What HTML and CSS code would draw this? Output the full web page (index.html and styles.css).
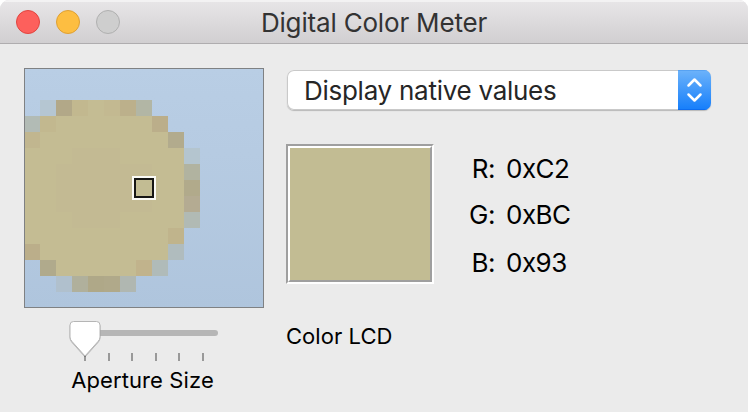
FILE: index.html
```html
<!DOCTYPE html>
<html lang="en">
<head>
<meta charset="utf-8">
<title>Digital Color Meter</title>
<link rel="stylesheet" href="styles.css">
</head>
<body>
<div class="window">
  <header class="titlebar">
    <div class="lights"><span class="light close"></span><span class="light minimize"></span><span class="light disabled"></span></div>
    <h1 class="title">Digital Color Meter</h1>
  </header>
  <main class="content">
    <section class="left">
      <svg class="lens" width="240" height="240" viewBox="0 0 240 240" shape-rendering="crispEdges">
        <defs><linearGradient id="sky" x1="0" y1="0" x2="0" y2="1"><stop offset="0" stop-color="#b9cee5"/><stop offset=".35" stop-color="#b6cbe2"/><stop offset="1" stop-color="#afc5dd"/></linearGradient></defs>
        <rect width="240" height="240" fill="url(#sky)"/>
        <path fill="#c4bc93" d="M32 32H112V48H144V64H160V80H176V160H160V192H128V208H32V192H0V48H32z"/>
        <path fill="#c3ba93" d="M48 80H96V96H128V144H96V160H48V144H32V96H48z"/>
        <g>
          <path fill="#b5c6d2" d="M16 32h16v16h-16z"/><path fill="#b2a888" d="M32 32h16v16h-16z"/><path fill="#c2b88f" d="M48 32h16v16h-16zM16 48h16v16h-16z"/><path fill="#c3b991" d="M80 32h16v16h-16z"/><path fill="#bcb08b" d="M96 32h16v16h-16z"/><path fill="#b2b6a5" d="M112 32h16v16h-16z"/>
          <path fill="#b2bbb5" d="M0 48h16v16h-16z"/><path fill="#bbae8a" d="M128 48h16v16h-16z"/>
          <path fill="#c1b68f" d="M0 64h16v16h-16z"/><path fill="#b2ab8d" d="M144 64h16v16h-16z"/>
          <path fill="#b4c5cf" d="M160 80h16v16h-16z"/><path fill="#b1b3a0" d="M160 96h16v16h-16z"/><path fill="#b1aa8b" d="M160 112h16v16h-16z"/><path fill="#b4ab92" d="M160 128h16v16h-16z"/><path fill="#b1bab4" d="M160 144h16v16h-16z"/>
          <path fill="#c0b48c" d="M144 160h16v16h-16z"/><path fill="#bbae8a" d="M0 176h16v16h-16z"/><path fill="#b0bcbe" d="M144 176h16v16h-16z"/>
          <path fill="#b0aa8c" d="M16 192h16v16h-16z"/><path fill="#c1b38c" d="M112 192h16v16h-16z"/><path fill="#b0bbb9" d="M128 192h16v16h-16z"/>
          <path fill="#b0c0cd" d="M32 208h16v16h-16z"/><path fill="#b0b09c" d="M48 208h16v16h-16z"/><path fill="#afa888" d="M64 208h16v16h-16z"/><path fill="#b0a98a" d="M80 208h16v16h-16z"/><path fill="#b0b7b1" d="M96 208h16v16h-16z"/>
        </g>
        <rect x="109" y="109" width="22" height="22" fill="none" stroke="#fafaf5" stroke-width="2"/>
        <rect x="111" y="111" width="18" height="18" fill="#c2bc93" stroke="#161614" stroke-width="2"/>
        <rect x=".5" y=".5" width="239" height="239" fill="none" stroke="#7f8183"/>
      </svg>
      <svg class="slider" width="240" height="56" viewBox="0 0 240 56">
        <rect x="48" y="22" width="146" height="6" rx="3" fill="#b6b6b6"/>
        <path fill="#999" d="M60 45h2v8h-2zM84 45h2v8h-2zM107 45h2v8h-2zM131 45h2v8h-2zM154 45h2v8h-2zM178 45h2v8h-2z"/>
        <path class="thumb" d="M49.500 13.500H72.500Q76 13.500 76 17V29Q76 31.500 74 33.500L61 48L48 33.500Q46 31.500 46 29V17Q46 13.500 49.500 13.500z"/>
      </svg>
      <div class="aperture">Aperture Size</div>
    </section>
    <section class="right">
      <div class="popup"><span class="popup-label">Display native values</span>
        <span class="stepper"><svg width="33" height="40" viewBox="0 0 33 40"><path d="M10.500 15.500L16.500 9.500L22.500 15.500M10.500 24.500L16.500 30.500L22.500 24.500" fill="none" stroke="#fff" stroke-width="2.500" stroke-linecap="round" stroke-linejoin="round"/></svg></span>
      </div>
      <div class="sample">
        <div class="well"><div class="ring"><div class="swatch"></div></div></div>
        <dl class="values">
          <dt>R:</dt><dd>0xC2</dd>
          <dt>G:</dt><dd>0xBC</dd>
          <dt>B:</dt><dd>0x93</dd>
        </dl>
      </div>
      <div class="display">Color LCD</div>
    </section>
  </main>
</div>
</body>
</html>
```
FILE: styles.css
```css
* { box-sizing: border-box; }
body { margin: 0; background: #fff; font-family: Inter, "Liberation Sans", sans-serif; color: #000; }
.window { width: 748px; height: 412px; background: #ebebeb; border-radius: 9px 9px 0 0; overflow: hidden; }
.titlebar { height: 44px; display: grid; grid-template-columns: 120px 1fr 120px; align-items: center; background: linear-gradient(#e8e6e8, #d1cfd1); border-bottom: 1px solid #afadaf; box-shadow: inset 0 2px 0 #f3f2f3; }
.lights { display: flex; gap: 16px; padding-left: 16px; }
.light { width: 24px; height: 24px; border-radius: 50%; border: 1px solid; }
.close { background: #fd605c; border-color: #e2443f; }
.minimize { background: #fdbe41; border-color: #dfa033; }
.disabled { background: #cecece; border-color: #b0b0b0; }
.title { margin: 0; padding-top: 2px; font-size: 26px; line-height: 32px; font-weight: 400; letter-spacing: -0.18px; text-align: center; color: #333; white-space: nowrap; }
.content { display: flex; gap: 23px; padding: 24px 0 0 24px; }
.left { width: 240px; }
.lens, .slider { display: block; }
.thumb { fill: #fff; stroke: #b5b5b5; stroke-width: 1; filter: drop-shadow(0 1px 0.5px rgba(0,0,0,.2)); }
.aperture { height: 28px; line-height: 28px; margin-top: 2px; text-align: center; font-size: 22px; letter-spacing: 0.1px; white-space: nowrap; padding-right: 3px; }
.right { width: 424px; padding-top: 2px; }
.popup { height: 40px; display: flex; justify-content: space-between; background: #fff; border-radius: 7px; box-shadow: 0 0 0 1px #c9c9c9 inset, 0 1px 1px rgba(0,0,0,.22); overflow: hidden; }
.popup-label { padding-left: 17px; font-size: 26px; line-height: 42px; letter-spacing: -0.27px; color: #262626; white-space: nowrap; }
.stepper { width: 33px; height: 40px; background: linear-gradient(#6db3fa, #157efb); box-shadow: inset 0 1px 0 #57a2f2, inset 0 -1px 0 #0d6df0; }
.stepper svg { display: block; }
.sample { display: flex; margin: 34px 0 0 -1px; }
.well { width: 148px; height: 140px; border: 2px solid; border-color: #9f9f9f #fff #fff #9f9f9f; }
.ring { height: 136px; border: 2px solid; border-color: #fff #9f9f9f #9f9f9f #fff; }
.swatch { height: 132px; background: #c2bc93; }
.values { margin: 0 0 0 24px; padding-top: 2px; display: grid; grid-template-columns: 37px auto; grid-template-rows: 46px 48px 46px; column-gap: 11px; font-size: 26px; line-height: 46px; letter-spacing: -0.5px; }
.values dt { text-align: right; }
.values dd { margin: 0; white-space: nowrap; }
.display { margin: 36px 0 0 -1px; font-size: 22px; line-height: 28px; letter-spacing: 0.05px; }
```
